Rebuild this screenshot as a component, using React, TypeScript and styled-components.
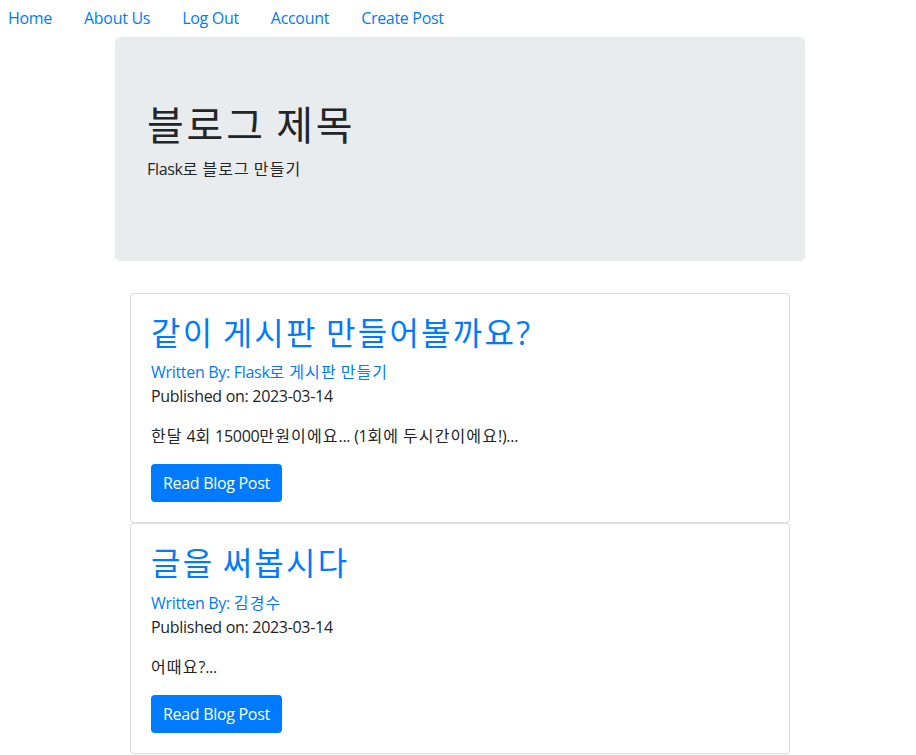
import React from "react";
import styled, { createGlobalStyle } from "styled-components";

const GlobalStyle = createGlobalStyle`
  html, body {
    margin: 0;
    padding: 0;
    background: #ffffff;
  }
  body {
    font-family: "Open Sans", "Noto Sans CJK KR", sans-serif;
    font-size: 16px;
    line-height: 24px;
    color: #212529;
  }
  * { box-sizing: border-box; }
`;

const Nav = styled.nav`
  display: flex;
  gap: 32px;
  padding: 6px 0 7px 8px;
  height: 37px;
`;

const NavLink = styled.a`
  color: #007bff;
  text-decoration: none;
  font-size: 16px;
  line-height: 24px;
  letter-spacing: -0.3px;
`;

const Container = styled.div`
  width: 720px;
  margin: 0 auto;
  margin-left: calc(50% - 358px);
  padding: 0 15px;
`;

const Jumbotron = styled.header`
  background: #e9ecef;
  border-radius: 4.8px;
  padding: 64px 32px;
  margin-bottom: 32px;
`;

const Title = styled.h1`
  margin: 0 0 8px;
  font-size: 40px;
  line-height: 48px;
  font-weight: 400;
`;

const Lead = styled.p`
  margin: 0 0 16px;
  letter-spacing: -0.3px;
`;

const PostList = styled.div`
  display: flex;
  flex-direction: column;
  padding: 0 15px;
`;

const Card = styled.article`
  border: 1px solid rgba(0, 0, 0, 0.125);
  border-radius: 4px;
  padding: 20px;
  background: #fff;
`;

const CardTitle = styled.h2`
  margin: 0 0 8px;
  font-size: 32px;
  line-height: 38.4px;
  font-weight: 400;
  color: #007bff;
`;

const Author = styled.a`
  display: block;
  color: #007bff;
  text-decoration: none;
  letter-spacing: -0.3px;
`;

const Para = styled.p`
  margin: 0 0 16px;
  letter-spacing: -0.3px;
`;

const Button = styled.a`
  display: inline-block;
  background: #007bff;
  color: #fff;
  text-decoration: none;
  padding: 7px 12px;
  line-height: 24px;
  border-radius: 4px;
  letter-spacing: -0.3px;
`;

const Hangul = styled.span`
  letter-spacing: 0.07em;
`;

function KText({ children }: { children: string }) {
  const parts = children.split(/([\uAC00-\uD7A3]+)/);
  return (
    <>
      {parts.map((part, i) =>
        /[\uAC00-\uD7A3]/.test(part) ? (
          <Hangul key={i}>{part}</Hangul>
        ) : (
          <React.Fragment key={i}>{part}</React.Fragment>
        )
      )}
    </>
  );
}

const posts = [
  {
    title: "같이 게시판 만들어볼까요?",
    author: "Flask로 게시판 만들기",
    date: "2023-03-14",
    body: "한달 4회 15000만원이에요... (1회에 두시간이에요!)...",
  },
  {
    title: "글을 써봅시다",
    author: "김경수",
    date: "2023-03-14",
    body: "어때요?...",
  },
];

export default function App() {
  return (
    <>
      <GlobalStyle />
      <Nav>
        {["Home", "About Us", "Log Out", "Account", "Create Post"].map((l) => (
          <NavLink key={l} href="#">
            {l}
          </NavLink>
        ))}
      </Nav>
      <Container>
        <Jumbotron>
          <Title>
            <KText>블로그 제목</KText>
          </Title>
          <Lead>
            <KText>Flask로 블로그 만들기</KText>
          </Lead>
        </Jumbotron>
        <PostList>
          {posts.map((p) => (
            <Card key={p.title}>
              <CardTitle>
                <KText>{p.title}</KText>
              </CardTitle>
              <Author href="#">
                <KText>{`Written By: ${p.author}`}</KText>
              </Author>
              <Para>Published on: {p.date}</Para>
              <Para>
                <KText>{p.body}</KText>
              </Para>
              <Button href="#">Read Blog Post</Button>
            </Card>
          ))}
        </PostList>
      </Container>
    </>
  );
}
